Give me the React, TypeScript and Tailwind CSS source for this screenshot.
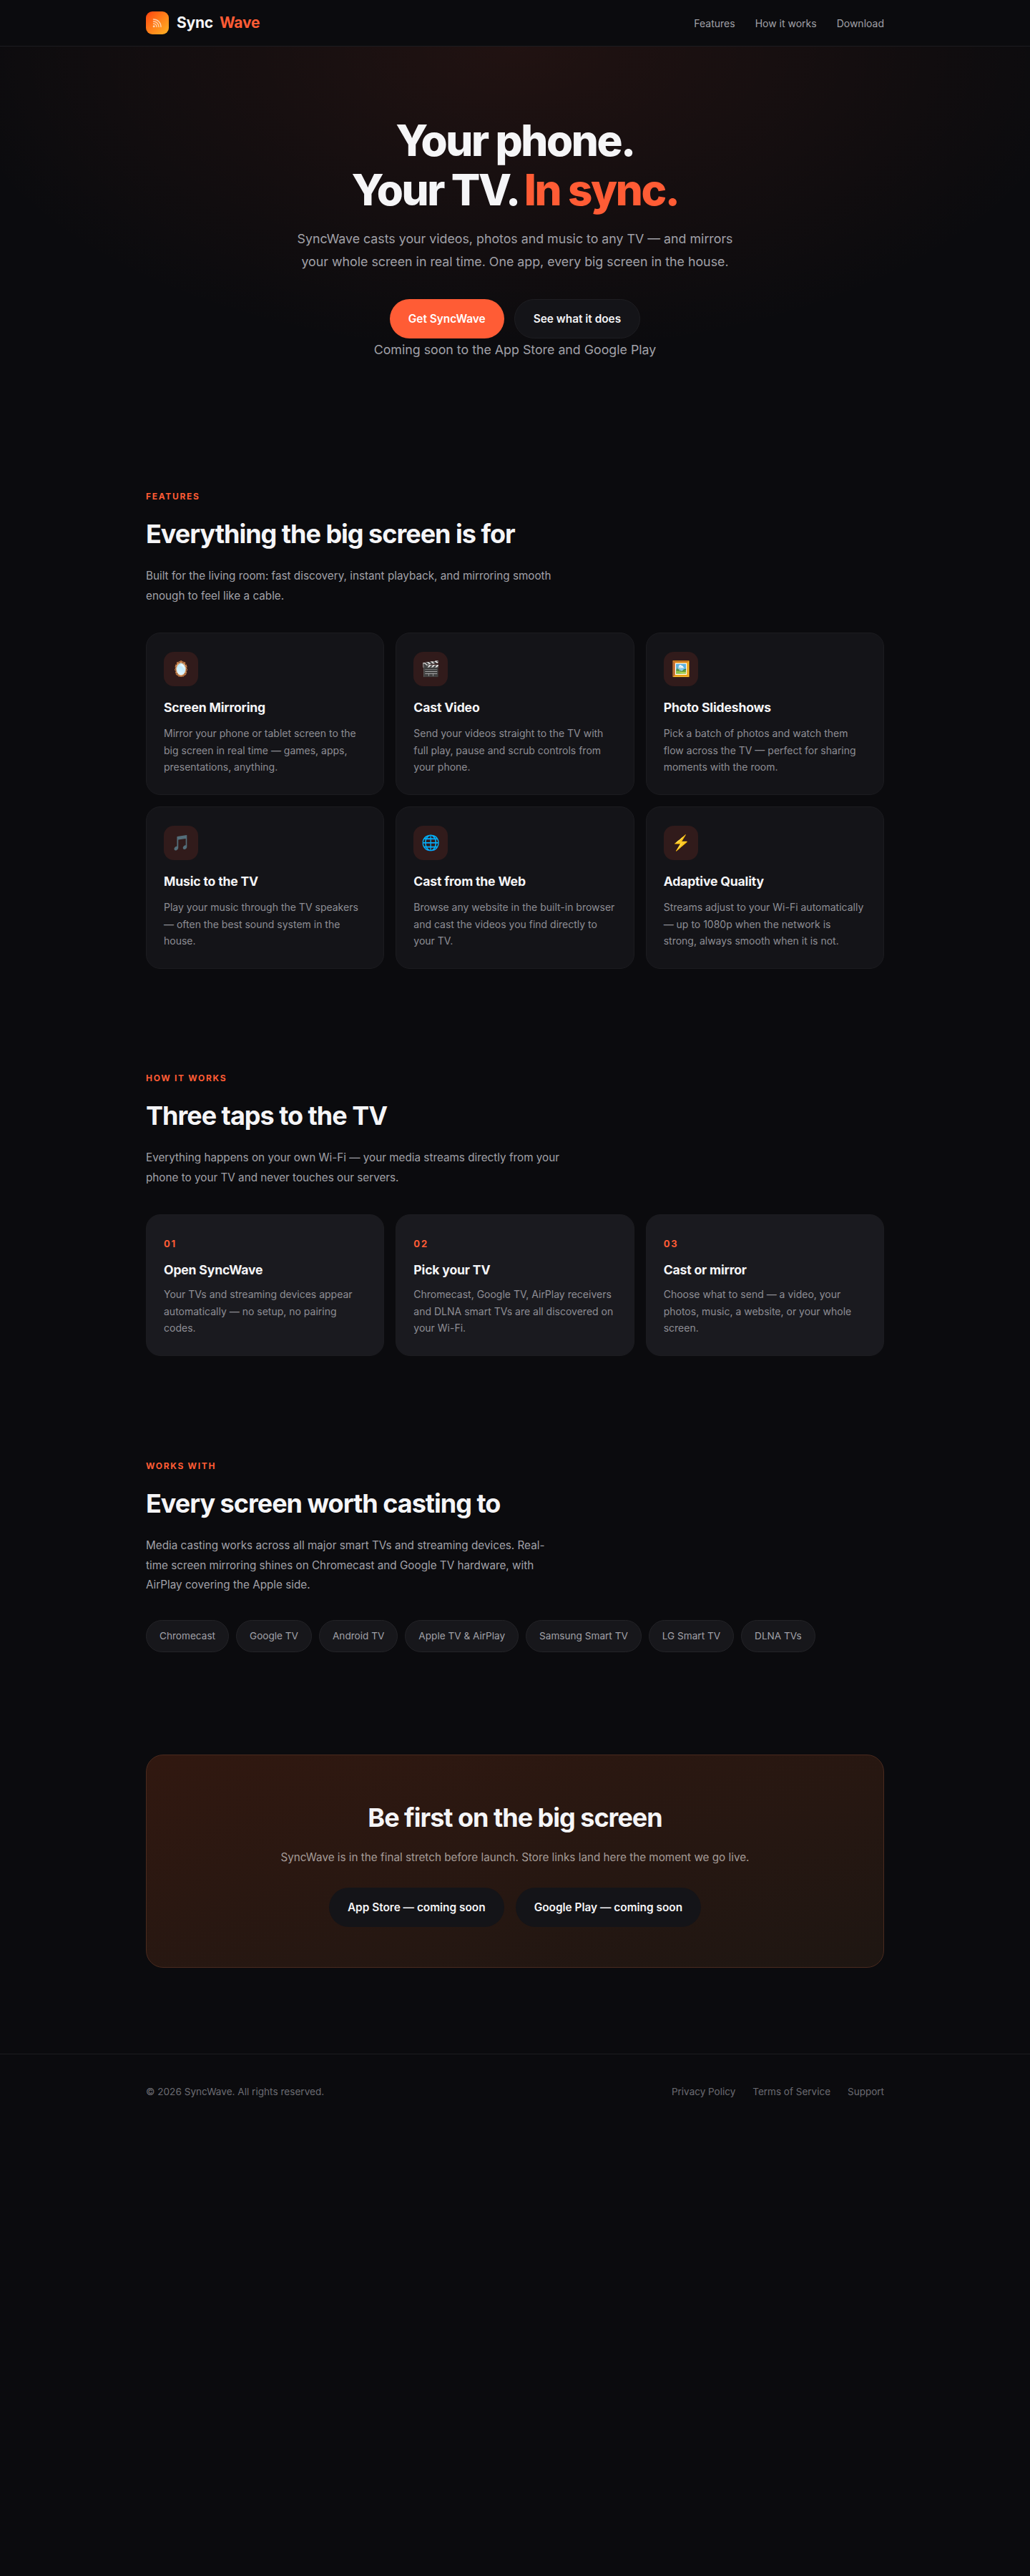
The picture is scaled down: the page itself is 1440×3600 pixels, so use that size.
const features = [
  { icon: '🪞', title: 'Screen Mirroring', text: 'Mirror your phone or tablet screen to the big screen in real time — games, apps, presentations, anything.' },
  { icon: '🎬', title: 'Cast Video', text: 'Send your videos straight to the TV with full play, pause and scrub controls from your phone.' },
  { icon: '🖼️', title: 'Photo Slideshows', text: 'Pick a batch of photos and watch them flow across the TV — perfect for sharing moments with the room.' },
  { icon: '🎵', title: 'Music to the TV', text: 'Play your music through the TV speakers — often the best sound system in the house.' },
  { icon: '🌐', title: 'Cast from the Web', text: 'Browse any website in the built-in browser and cast the videos you find directly to your TV.' },
  { icon: '⚡', title: 'Adaptive Quality', text: 'Streams adjust to your Wi-Fi automatically — up to 1080p when the network is strong, always smooth when it is not.' },
];

const steps = [
  { num: '01', title: 'Open SyncWave', text: 'Your TVs and streaming devices appear automatically — no setup, no pairing codes.' },
  { num: '02', title: 'Pick your TV', text: 'Chromecast, Google TV, AirPlay receivers and DLNA smart TVs are all discovered on your Wi-Fi.' },
  { num: '03', title: 'Cast or mirror', text: 'Choose what to send — a video, your photos, music, a website, or your whole screen.' },
];

const devices = ['Chromecast', 'Google TV', 'Android TV', 'Apple TV & AirPlay', 'Samsung Smart TV', 'LG Smart TV', 'DLNA TVs'];

function SectionHead({ label, title, children }: { label: string; title: string; children: React.ReactNode }) {
  return (
    <>
      <p className="text-[12px] leading-[21.6px] font-bold tracking-[0.14em] uppercase text-[#ff5c35]">{label}</p>
      <h2 className="mt-2.5 text-[36px] leading-[63.4px] font-bold tracking-[-0.028em] text-[#f5f5f7]">{title}</h2>
      <p className="mt-[13px] max-w-[580px] text-[15.25px] leading-[27.4px] text-[#a1a1a8]">{children}</p>
    </>
  );
}

export default function App() {
  return (
    <div className="min-h-[3600px] bg-[#0b0b0e] font-['Inter','Noto_Sans',sans-serif] text-[#f5f5f7]">
      {/* Nav */}
      <nav className="h-[65px] border-b border-[#1c1c20]">
        <div className="mx-auto flex h-16 max-w-[1032px] items-center justify-between">
          <div className="flex items-center gap-[11px]">
            <div className="flex h-8 w-8 items-center justify-center rounded-[9px] bg-gradient-to-br from-[#ff3d0f] to-[#ffb224]">
              <svg width="14" height="14" viewBox="0 0 14 14" fill="none" stroke="#ffe6d0" strokeWidth="1.4" strokeLinecap="round" className="opacity-80">
                <circle cx="2.2" cy="11.8" r="0.8" fill="#ffe6d0" />
                <path d="M1.5 8a4.5 4.5 0 0 1 4.5 4.5" />
                <path d="M1.5 5a7.5 7.5 0 0 1 7.5 7.5" />
                <path d="M1.5 2a10.5 10.5 0 0 1 10.5 10.5" />
              </svg>
            </div>
            <span className="flex gap-[9px] text-[21px] font-bold tracking-[-0.01em]">
              <span>Sync</span>
              <span className="text-[#ff5c35]">Wave</span>
            </span>
          </div>
          <div className="flex gap-7 text-[14px] text-[#a1a1a8]">
            <a>Features</a>
            <a>How it works</a>
            <a>Download</a>
          </div>
        </div>
      </nav>

      {/* Hero */}
      <section className="flex flex-col items-center bg-[radial-gradient(ellipse_80%_100%_at_50%_0%,rgba(255,92,53,0.09),transparent_70%)] pt-[97px] pb-[178px] text-center">
        <h1 className="text-[60px] leading-[69px] font-extrabold tracking-[-0.04em] text-[#f5f5f7]">
          Your phone.
          <br />
          Your TV.<span className="ml-[7px] text-[#ff5c35]">In sync.</span>
        </h1>
        <p className="mt-[18px] max-w-[620px] text-[17.8px] leading-[32.4px] text-[#a1a1a8]">
          SyncWave casts your videos, photos and music to any TV — and mirrors your whole screen in real time. One app, every big screen in the house.
        </p>
        <div className="mt-[35px] flex gap-3.5">
          <a className="flex h-[55px] items-center rounded-full bg-[#ff5c35] px-[26px] text-[15.4px] font-semibold text-white">Get SyncWave</a>
          <a className="flex h-[55px] items-center rounded-full border border-[#1e1e22] bg-[#141418] px-[26px] text-[15.4px] font-semibold text-[#f5f5f7]">See what it does</a>
        </div>
        <p className="text-[17.8px] leading-[32.4px] text-[#a1a1a8]">Coming soon to the App Store and Google Play</p>
      </section>

      {/* Features */}
      <section className="mx-auto max-w-[1032px] pb-[142px]">
        <SectionHead label="Features" title="Everything the big screen is for">
          Built for the living room: fast discovery, instant playback, and mirroring smooth enough to feel like a cable.
        </SectionHead>
        <div className="mt-[38px] grid grid-cols-3 gap-4">
          {features.map((f) => (
            <div key={f.title} className="rounded-[20px] border border-[#1c1c20] bg-[#141418] px-6 py-[26px]">
              <div className="flex h-12 w-12 items-center justify-center rounded-[14px] bg-[#311b1b] text-[21px]">{f.icon}</div>
              <h3 className="mt-[14px] text-[17.6px] leading-[31.7px] font-bold tracking-[-0.01em]">{f.title}</h3>
              <p className="mt-2 text-[14px] leading-[23.8px] text-[#8e8e95]">{f.text}</p>
            </div>
          ))}
        </div>
      </section>

      {/* How it works */}
      <section className="mx-auto max-w-[1032px] pb-[143px]">
        <SectionHead label="How it works" title="Three taps to the TV">
          Everything happens on your own Wi-Fi — your media streams directly from your phone to your TV and never touches our servers.
        </SectionHead>
        <div className="mt-[38px] grid grid-cols-3 gap-4">
          {steps.map((s) => (
            <div key={s.num} className="rounded-[20px] border border-[#1c1c20] bg-[#1a1a1f] px-6 pt-[29px] pb-[26px]">
              <p className="text-[13px] leading-[23px] font-bold tracking-[0.14em] text-[#ff5c35]">{s.num}</p>
              <h3 className="mt-[9px] text-[17.6px] leading-[31.7px] font-bold tracking-[-0.01em]">{s.title}</h3>
              <p className="mt-1.5 text-[14px] leading-[23.8px] text-[#8e8e95]">{s.text}</p>
            </div>
          ))}
        </div>
      </section>

      {/* Works with */}
      <section className="mx-auto max-w-[1032px] pb-[143px]">
        <SectionHead label="Works with" title="Every screen worth casting to">
          Media casting works across all major smart TVs and streaming devices. Real-time screen mirroring shines on Chromecast and Google TV hardware, with AirPlay covering the Apple side.
        </SectionHead>
        <div className="mt-9 flex flex-wrap gap-2.5">
          {devices.map((d) => (
            <span key={d} className="rounded-full border border-[#232327] bg-[#17171b] px-[18px] py-[9px] text-[13.6px] leading-[24.5px] text-[#a1a1a8]">{d}</span>
          ))}
        </div>
      </section>

      {/* CTA */}
      <section className="mx-auto max-w-[1032px] pb-[120px]">
        <div className="flex flex-col items-center rounded-[24px] border border-[#4a2a1e] bg-gradient-to-br from-[#311810] to-[#1e1612] py-14 text-center">
          <h2 className="text-[36px] leading-[63.4px] font-bold tracking-[-0.028em]">Be first on the big screen</h2>
          <p className="mt-2.5 text-[15.25px] leading-[27.4px] text-[#a59c98]">SyncWave is in the final stretch before launch. Store links land here the moment we go live.</p>
          <div className="mt-7 flex gap-4">
            <a className="flex h-[55px] items-center rounded-full bg-[#141418] px-[26px] text-[15.4px] font-semibold">App Store — coming soon</a>
            <a className="flex h-[55px] items-center rounded-full bg-[#141418] px-[26px] text-[15.4px] font-semibold">Google Play — coming soon</a>
          </div>
        </div>
      </section>

      {/* Footer */}
      <footer className="border-t border-[#1c1c20]">
        <div className="mx-auto flex max-w-[1032px] items-center justify-between py-10 text-[13.6px] leading-[24.5px] text-[#6b6b72]">
          <span>© 2026 SyncWave. All rights reserved.</span>
          <div className="flex gap-6 text-[13.5px]">
            <a>Privacy Policy</a>
            <a>Terms of Service</a>
            <a>Support</a>
          </div>
        </div>
      </footer>
    </div>
  );
}
